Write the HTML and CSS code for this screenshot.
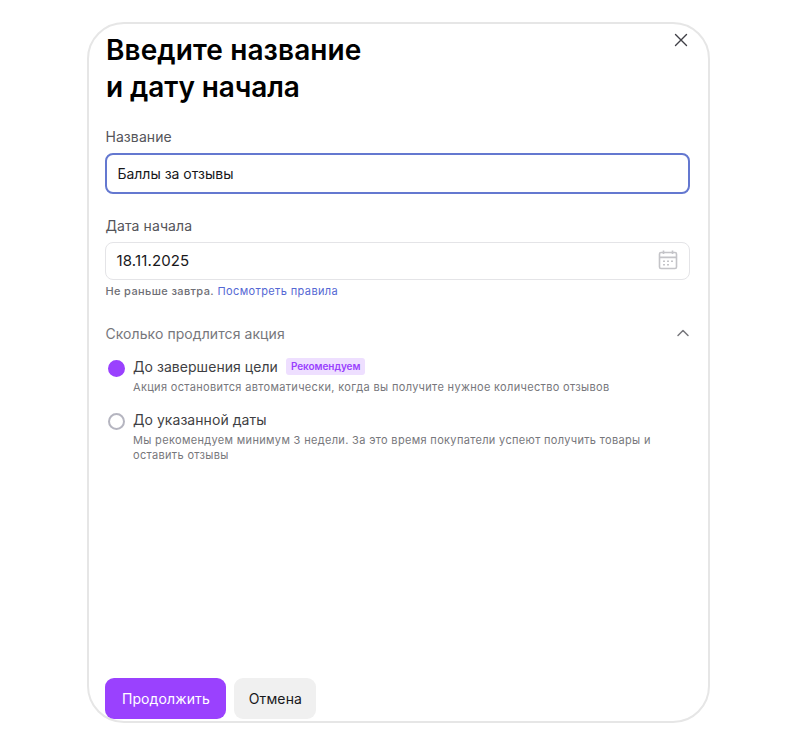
FILE: index.html
```html
<!DOCTYPE html>
<html lang="ru">
<head>
    <meta charset="UTF-8">
    <title>Баллы за отзывы</title>
    <link rel="stylesheet" href="styles.css">
</head>
<body>
<form class="modal">
    <div class="header">
        <h1 class="title"><span class="title-top">Введите название</span><br>и дату начала</h1>
        <button type="button" class="close">
            <svg width="14" height="14" viewBox="0 0 14 14" fill="none" stroke="#3f3f46" stroke-width="1.4" stroke-linecap="round">
                <path d="M1.5 1.5l11 11M12.5 1.5l-11 11"/>
            </svg>
        </button>
    </div>

    <label class="label" for="name">Название</label>
    <div class="field active">
        <input class="input name" id="name" type="text" value="Баллы за отзывы">
    </div>

    <label class="label" for="date">Дата начала</label>
    <div class="field">
        <input class="input date" id="date" type="text" value="18.11.2025">
        <svg class="calendar" width="20" height="20" viewBox="0 0 20 20" fill="none" stroke="#c4c4c8" stroke-width="1.6">
            <rect x="1.5" y="2.5" width="17" height="16" rx="1.5"/>
            <path d="M1 7.4h18M5.5 0.5v3.5M14.5 0.5v3.5"/>
            <path d="M5 11.3h2M9 11.3h2M13 11.3h2M5 14.8h2M9 14.8h2"/>
        </svg>
    </div>
    <p class="hint"><span class="hint-text">Не раньше завтра.</span> <a class="link" href="#">Посмотреть правила</a></p>

    <div class="section">
        <span class="section-title">Сколько продлится акция</span>
        <svg class="chevron" width="14" height="8" viewBox="0 0 14 8" fill="none" stroke="#77777c" stroke-width="1.5" stroke-linecap="round" stroke-linejoin="round">
            <path d="M2 6.5l5-5 5 5"/>
        </svg>
    </div>

    <label class="option">
        <input class="radio" type="radio" name="end" checked>
        <span class="option-body">
            <span class="option-head">
                <span class="option-title">До завершения цели</span>
                <span class="badge">Рекомендуем</span>
            </span>
            <span class="option-text">Акция остановится автоматически, когда вы получите нужное количество отзывов</span>
        </span>
    </label>
    <label class="option">
        <input class="radio" type="radio" name="end">
        <span class="option-body">
            <span class="option-head">
                <span class="option-title">До указанной даты</span>
            </span>
            <span class="option-text">Мы рекомендуем минимум 3 недели. За это время покупатели успеют получить товары и<br>оставить отзывы</span>
        </span>
    </label>

    <div class="footer">
        <button type="button" class="btn primary">Продолжить</button>
        <button type="button" class="btn secondary">Отмена</button>
    </div>
</form>
</body>
</html>
```
FILE: styles.css
```css
* {
    box-sizing: border-box;
    font-family: Inter, "Liberation Sans", sans-serif;
}

body {
    margin: 0;
    background-color: white;
}

.modal {
    display: flex;
    flex-direction: column;
    width: 623px;
    height: 701px;
    margin: 22px 0 0 87px;
    padding: 7px 18px 2px 16.4px;
    border: 2px solid #e6e6e6;
    border-radius: 37px;
}

.header {
    display: flex;
    justify-content: space-between;
    align-items: flex-start;
}

.title {
    margin: 1px 0 0 0.6px;
    font-size: 28px;
    line-height: 37px;
    font-weight: 600;
    letter-spacing: -0.1px;
    color: black;
}

.title-top {
    letter-spacing: 0.1px;
}

.close {
    display: flex;
    margin: 2px 2px 0 0;
    padding: 0;
    border: none;
    background: none;
    cursor: pointer;
}

.label {
    margin-top: 22px;
    font-size: 14px;
    line-height: 20px;
    letter-spacing: 0.1px;
    color: #55555a;
}

.header + .label {
    margin-top: 21px;
}

.field {
    display: flex;
    align-items: center;
    height: 38px;
    margin-top: 6px;
    padding: 0 11px 1px 10px;
    border: 1px solid #e4e4e7;
    border-radius: 8px;
}

.field.active {
    height: 41px;
    padding-bottom: 0;
    border: 2px solid #6478d0;
}

.input {
    flex: 1;
    padding: 0;
    border: none;
    outline: none;
    background: none;
    color: #18181b;
}

.name {
    font-size: 14px;
}

.date {
    font-size: 15px;
    letter-spacing: 0.15px;
}

.calendar {
    margin-bottom: 1px;
}

.hint {
    margin: 3px 0 0;
    font-size: 11px;
    line-height: 16px;
    letter-spacing: 0.38px;
}

.hint-text {
    font-weight: 500;
    color: #6f6f76;
}

.link {
    color: #5468d4;
    text-decoration: none;
}

.section {
    display: flex;
    justify-content: space-between;
    align-items: center;
    margin-top: 25px;
    font-size: 14px;
    line-height: 20px;
    letter-spacing: 0.08px;
    color: #77777c;
}

.chevron {
    margin-bottom: 2px;
}

.option {
    display: flex;
    margin-top: 14px;
}

.section + .option {
    margin-top: 12px;
}

.radio {
    appearance: none;
    flex: none;
    width: 17px;
    height: 17px;
    margin: 4px 8px 0 2.6px;
    border: 2px solid #b5b5c0;
    border-radius: 50%;
}

.radio:checked {
    border-color: #9a41fe;
    background-color: #9a41fe;
}

.option-body {
    display: flex;
    flex-direction: column;
}

.option-head {
    display: flex;
    align-items: center;
    gap: 8px;
    height: 21px;
}

.option-title {
    font-size: 14px;
    letter-spacing: 0.05px;
    color: #3f3f44;
}

.badge {
    height: 17px;
    padding: 0 5px;
    border-radius: 3px;
    background-color: #eedfff;
    font-size: 10px;
    line-height: 17px;
    font-weight: 600;
    letter-spacing: -0.05px;
    color: #9a41fe;
}

.option-text {
    margin-top: 3px;
    font-size: 11px;
    line-height: 15px;
    letter-spacing: 0.33px;
    white-space: nowrap;
    color: #77777c;
}

.footer {
    display: flex;
    gap: 8px;
    margin-top: auto;
}

.btn {
    height: 41px;
    padding: 0;
    border: none;
    border-radius: 9px;
    font-size: 14px;
    letter-spacing: 0.12px;
    cursor: pointer;
}

.primary {
    width: 121px;
    background-color: #9a41fe;
    color: white;
}

.secondary {
    width: 82px;
    background-color: #f0f0f0;
    color: #18181b;
}
```
